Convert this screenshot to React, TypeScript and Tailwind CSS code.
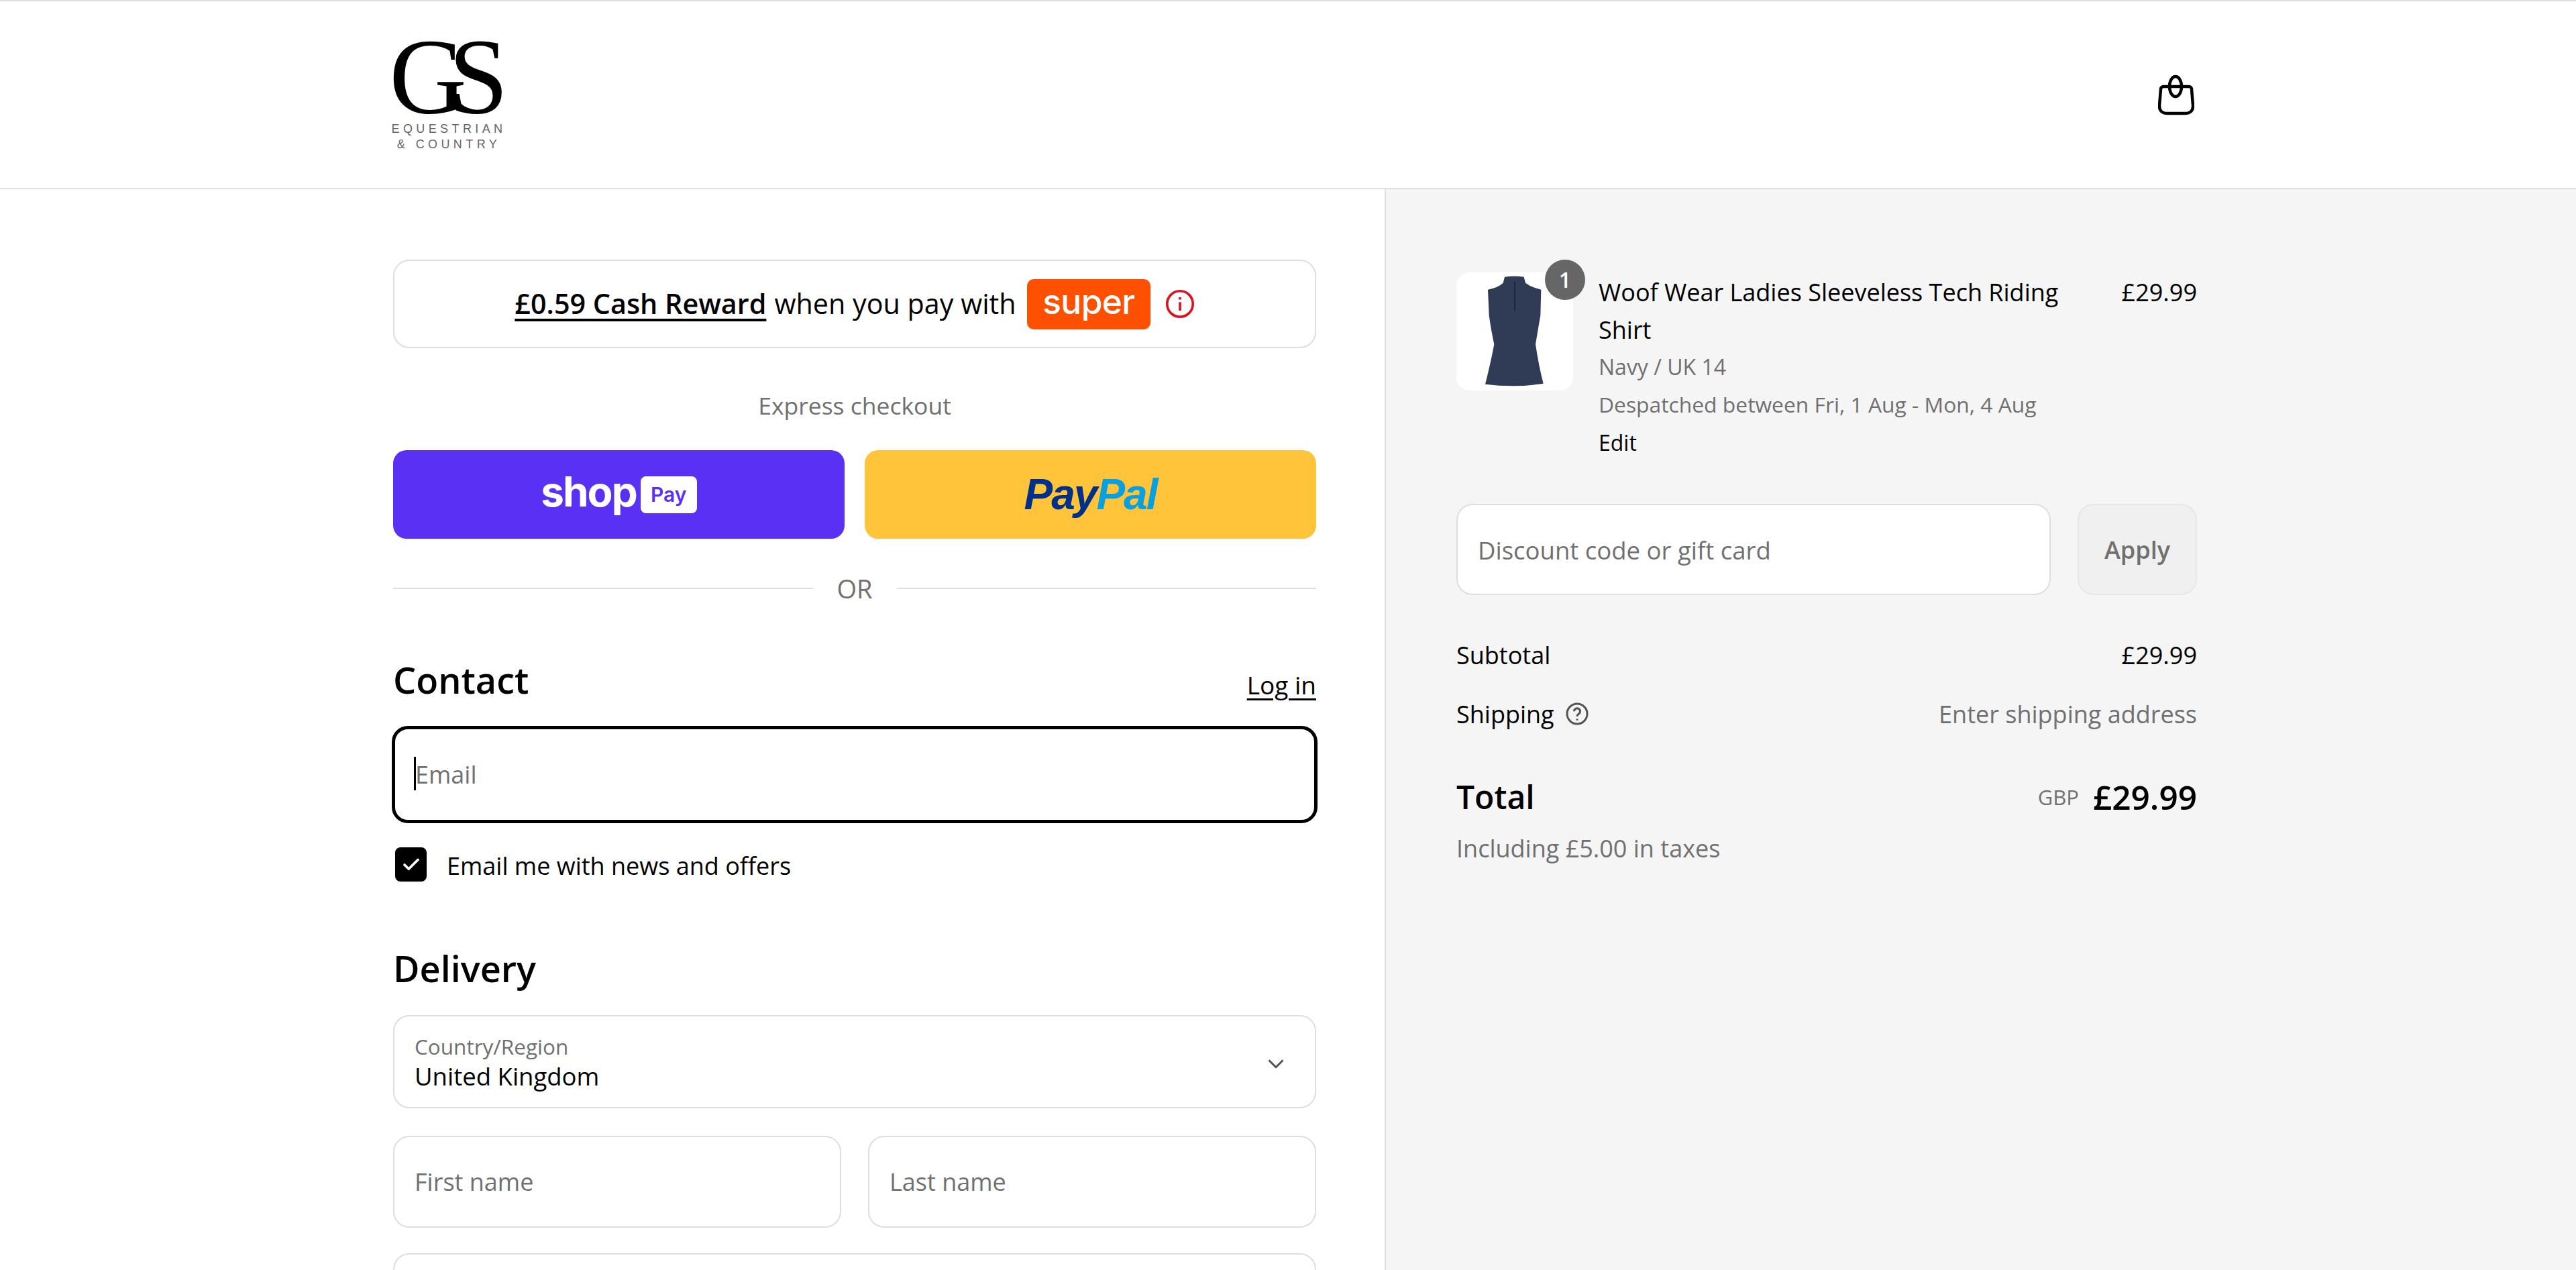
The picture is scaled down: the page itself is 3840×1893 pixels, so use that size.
import { Check, ChevronDown } from "lucide-react";

function Field({ placeholder }: { placeholder: string }) {
  return (
    <div className="flex-1 h-[137px] bg-white border-2 border-[#dedede] rounded-[24px] flex items-center px-[30px] text-[36px] text-[#707070]">
      {placeholder}
    </div>
  );
}

function Logo() {
  return (
    <div className="w-[166px] flex flex-col items-center">
      <div className="h-[118px] flex items-center font-['Liberation_Serif',serif] text-[160px] leading-[118px] text-black tracking-[-27px] pr-[27px]">GS</div>
      <div className="mt-[8px] font-['Liberation_Sans',sans-serif] text-[18px] leading-[23px] tracking-[5.400px] text-[#666] text-center whitespace-nowrap">
        EQUESTRIAN
        <br />& COUNTRY
      </div>
    </div>
  );
}

function BagIcon() {
  return (
    <svg width="54" height="62" viewBox="0 0 54 62" fill="none" stroke="black" strokeWidth="4.500">
      <path d="M8 19h38a4 4 0 0 1 4 4l2 24c.5 8-4 12-12 12H14c-8 0-12.500-4-12-12l2-24a4 4 0 0 1 4-4z" />
      <ellipse cx="26" cy="19" rx="9" ry="15" />
    </svg>
  );
}

function Shirt() {
  return (
    <svg className="w-full h-full" viewBox="66 78 522 528">
      <path
        d="M282 98Q325 92 368 98L375 125Q400 145 445 155L442 270Q430 340 420 400Q435 500 455 575Q330 595 195 578Q220 480 235 400Q220 330 212 270L207 155Q255 145 275 125Z"
        fill="#303c55"
      />
      <path d="M327 120V250" stroke="#182238" strokeWidth="5" />
    </svg>
  );
}

export default function App() {
  return (
    <div className="h-[1893px] w-[3840px] overflow-hidden bg-white font-['Open_Sans',sans-serif] text-[36px] text-black">
      <header className="h-[282px] border-t-2 border-b-2 border-[#dedede] flex items-center justify-between pl-[586px] pr-[569px]">
        <Logo />
        <BagIcon />
      </header>

      <main className="flex h-[1611px]">
        {/* form */}
        <section className="w-[2066px] pl-[586px] pr-[102px] border-r-2 border-[#dedede]">
          <div className="mt-[105px] h-[132px] border-2 border-[#dedede] rounded-[24px] flex items-center justify-center text-[41.300px]">
            <span className="font-semibold underline decoration-[4px] underline-offset-[7px]">£0.59 Cash Reward</span>
            <span className="ml-[12px]">when you pay with</span>
            <span className="ml-[16px] w-[184px] h-[75px] bg-[#ff4f00] rounded-[10px] flex items-center justify-center text-white font-['Inter',sans-serif] font-medium text-[52px] leading-none pb-[6px] tracking-[-1px]">super</span>
            <svg className="ml-[22px]" width="44" height="44" viewBox="0 0 24 24" fill="none" stroke="#d9141f" strokeWidth="2">
              <circle cx="12" cy="12" r="10.500" />
              <path d="M12 10.500v7M12 6.500v2" />
            </svg>
          </div>

          <div className="mt-[61px] h-[50px] flex items-center justify-center text-[35.500px] text-[#707070]">Express checkout</div>

          <div className="mt-[41px] flex gap-[30px]">
            <div className="flex-1 h-[132px] bg-[#5a31f4] rounded-[20px] flex items-center justify-center gap-[6px]">
              <span className="font-['Inter',sans-serif] font-bold text-white text-[62px] leading-none pb-[8px] tracking-[-2px]">shop</span>
              <span className="w-[84px] h-[55px] bg-white rounded-[8px] flex items-center justify-center font-['Inter',sans-serif] font-semibold text-[#5a31f4] text-[30px]">Pay</span>
            </div>
            <div className="flex-1 h-[132px] bg-[#ffc439] rounded-[20px] flex items-center justify-center font-['Liberation_Sans',sans-serif] font-bold italic text-[64px] tracking-[-2px]">
              <span className="text-[#003087]">Pay</span>
              <span className="text-[#0a9fdf]">Pal</span>
            </div>
          </div>

          <div className="mt-[49px] h-[50px] flex items-center gap-[36px] text-[#707070] text-[38px]">
            <div className="flex-1 h-[2px] bg-[#dedede]" />
            OR
            <div className="flex-1 h-[2px] bg-[#dedede]" />
          </div>

          <div className="mt-[83px] h-[60px] flex items-center justify-between">
            <h2 className="text-[54px] font-semibold pb-[3px]">Contact</h2>
            <a className="text-[37px] underline underline-offset-[6px] pt-[12px]">Log in</a>
          </div>

          <div className="relative mt-[37px] -mx-[2px] h-[145px] border-[5px] border-black rounded-[24px] flex items-center pl-[30px] text-[#707070]">
            <span className="absolute left-[28px] top-[41px] w-[3px] h-[50px] bg-black" />
            Email
          </div>

          <div className="mt-[36px] h-[51px] flex items-center">
            <div className="ml-[3px] w-[47px] h-[51px] bg-black rounded-[8px] flex items-center justify-center">
              <Check className="text-white" size={30} strokeWidth={3} />
            </div>
            <span className="ml-[30px] pt-[4px]">Email me with news and offers</span>
          </div>

          <h2 className="mt-[99px] h-[60px] flex items-center text-[54px] font-semibold">Delivery</h2>

          <div className="mt-[40px] h-[139px] border-2 border-[#dedede] rounded-[24px] flex items-center justify-between px-[30px]">
            <div className="flex flex-col">
              <span className="text-[31.500px] leading-[42px] text-[#707070]">Country/Region</span>
              <span className="leading-[46px] text-[36.500px]">United Kingdom</span>
            </div>
            <ChevronDown className="text-[#555] mr-[9px] mt-[6px]" size={38} strokeWidth={2} />
          </div>

          <div className="mt-[41px] flex gap-[40px]">
            <Field placeholder="First name" />
            <Field placeholder="Last name" />
          </div>

          <div className="mt-[38px] h-[140px] border-2 border-[#dedede] rounded-[24px]" />
        </section>

        {/* order summary */}
        <aside className="flex-1 bg-[#f5f5f5] pl-[105px]">
          <div className="w-[1104px]">
            <div className="mt-[124px] flex">
              <div className="relative w-[174px] h-[176px] bg-white rounded-[20px] shrink-0">
                <Shirt />
                <span className="absolute -top-[19px] -right-[18px] w-[60px] h-[60px] rounded-full bg-[#666] text-white text-[32px] font-semibold flex items-center justify-center">1</span>
              </div>
              <div className="ml-[38px] flex-1 pt-[2px]">
                <div className="flex justify-between">
                  <p className="w-[740px] leading-[56px]">Woof Wear Ladies Sleeveless Tech Riding Shirt</p>
                  <span className="leading-[56px]">£29.99</span>
                </div>
                <p className="mt-[2px] h-[50px] flex items-center text-[32px] text-[#707070]">Navy / UK 14</p>
                <p className="mt-[6px] h-[50px] flex items-center text-[31.800px] text-[#707070]">Despatched between Fri, 1 Aug - Mon, 4 Aug</p>
                <p className="mt-[7px] h-[50px] flex items-center text-[32px]">Edit</p>
              </div>
            </div>

            <div className="mt-[66px] flex gap-[40px]">
              <div className="flex-1 h-[136px] bg-white border-2 border-[#dedede] rounded-[24px] flex items-center px-[30px] pt-[2px] text-[36.500px] text-[#707070]">
                Discount code or gift card
              </div>
              <div className="w-[178px] h-[136px] bg-[#f0f0f0] border-2 border-[#e6e6e6] rounded-[24px] flex items-center justify-center pt-[2px] text-[#707070] font-semibold">
                Apply
              </div>
            </div>

            <div className="mt-[65px] h-[50px] flex items-center justify-between">
              <span>Subtotal</span>
              <span>£29.99</span>
            </div>
            <div className="mt-[38px] h-[50px] flex items-center justify-between">
              <span className="flex items-center gap-[16px]">
                Shipping
                <svg className="-mt-[2px]" width="36" height="36" viewBox="0 0 24 24" fill="none" stroke="#555" strokeWidth="2">
                  <circle cx="12" cy="12" r="10" />
                  <path d="M9 9.500a3 3 0 1 1 4.500 2.600c-1 .6-1.500 1.200-1.500 2.400M12 17v1.500" />
                </svg>
              </span>
              <span className="text-[#707070]">Enter shipping address</span>
            </div>
            <div className="mt-[63px] h-[70px] flex items-center justify-between">
              <span className="text-[48px] font-semibold">Total</span>
              <span className="flex items-center gap-[21px]">
                <span className="text-[31px] text-[#707070]">GBP</span>
                <span className="text-[49.500px] font-semibold">£29.99</span>
              </span>
            </div>
            <p className="mt-[17px] h-[50px] flex items-center text-[#707070]">Including £5.00 in taxes</p>
          </div>
        </aside>
      </main>
    </div>
  );
}
